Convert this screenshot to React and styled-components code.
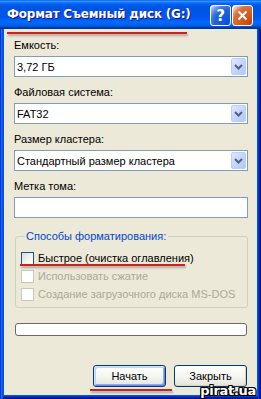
import React from "react";
import styled, { createGlobalStyle } from "styled-components";

const Global = createGlobalStyle`
  html, body { margin: 0; padding: 0; background: #ffffff; }
  body { font-family: "Liberation Sans", Arial, sans-serif; font-size: 11px; color: #000; }
  #root { width: 261px; height: 399px; overflow: hidden; }
`;

const Window = styled.div`
  position: relative;
  width: 261px;
  height: 399px;
  display: flex;
  flex-direction: column;
`;

const TitleBar = styled.div`
  height: 29px;
  flex: none;
  display: flex;
  align-items: center;
  padding: 0 8px 0 7px;
  box-sizing: border-box;
  background: linear-gradient(
    180deg,
    #0058ee 0%,
    #3a93ff 4%,
    #288eff 6%,
    #127dff 8%,
    #036ffc 10%,
    #0262ee 14%,
    #0057e5 20%,
    #0054e3 24%,
    #0055eb 56%,
    #005bf5 66%,
    #026afe 76%,
    #0062ef 86%,
    #0052d6 92%,
    #0040ab 94%,
    #003092 100%
  );
`;

const TitleText = styled.div`
  flex: 1;
  color: #ffffff;
  font-family: "DejaVu Sans", "Liberation Sans", sans-serif;
  font-weight: bold;
  font-size: 12px;
  letter-spacing: -0.2px;
  text-shadow: 1px 1px #0f1089;
  white-space: nowrap;
  padding-bottom: 1px;
`;

const TitleButtons = styled.div`
  display: flex;
  gap: 1px;
  margin-top: 2px;
`;

const CaptionButton = styled.div`
  width: 21px;
  height: 21px;
  box-sizing: border-box;
  border: 1px solid #ffffff;
  border-radius: 3px;
  display: flex;
  align-items: center;
  justify-content: center;
  color: #ffffff;
  font-family: "DejaVu Sans", sans-serif;
  font-weight: bold;
  font-size: 15px;
  background: ${(p) =>
    p.$close
      ? "radial-gradient(circle at 90% 90%, #cc4600 0%, #dc6527 55%, #cd7546 70%, #ffccb2 90%, #fff 100%)"
      : "radial-gradient(circle at 90% 90%, #0054e9 0%, #2263d5 55%, #4479e4 70%, #a3bbec 90%, #fff 100%)"};
`;

const Frame = styled.div`
  flex: 1;
  display: flex;
  padding: 0 4px 4px 4px;
  background: #0055e5;
  box-shadow: inset 1px 0 #0831d9, inset 2px 0 #166aee, inset 3px 0 #0855dd,
    inset -1px 0 #00138c, inset -2px 0 #001ea0, inset -3px 0 #003bda,
    inset 0 -1px #00138c, inset 0 -2px #001ea0, inset 0 -3px #003bda;
`;

const Client = styled.div`
  position: relative;
  flex: 1;
  display: flex;
  flex-direction: column;
  background: #ece9d8;
  padding: 9px 9px 0 10px;
`;

const Field = styled.div`
  display: flex;
  flex-direction: column;
  margin-bottom: 8px;
`;

const Label = styled.div`
  line-height: 14px;
  height: 14px;
  margin-bottom: 4px;
  white-space: nowrap;
`;

const Combo = styled.div`
  height: 21px;
  box-sizing: border-box;
  border: 1px solid #7f9db9;
  background: #ffffff;
  display: flex;
  align-items: center;
  padding-left: 2px;
  white-space: nowrap;
`;

const ComboText = styled.span`
  flex: 1;
`;

const DropButton = styled.div`
  width: 15px;
  height: 17px;
  margin-right: 1px;
  box-sizing: border-box;
  border: 1px solid #bccffb;
  border-radius: 2px;
  background: linear-gradient(135deg, #dfe8fd 0%, #c6d6fb 50%, #b3c7f7 100%);
  display: flex;
  align-items: center;
  justify-content: center;
`;

const TextBox = styled.div`
  height: 21px;
  box-sizing: border-box;
  border: 1px solid #7f9db9;
  background: #ffffff;
`;

const Group = styled.fieldset`
  margin: 3px 0 0 1px;
  padding: 6px 0 4px 5px;
  border: 1px solid #d0d0bf;
  border-radius: 3px;
  display: flex;
  flex-direction: column;
`;

const Legend = styled.legend`
  color: #0046d5;
  line-height: 14px;
  padding: 0 2px 0 1px;
  margin-left: 4px;
`;

const CheckRow = styled.div`
  height: 18px;
  display: flex;
  align-items: center;
  gap: 4px;
  white-space: nowrap;
  color: ${(p) => (p.$disabled ? "#aca899" : "#000000")};
`;

const Box = styled.span`
  width: 13px;
  height: 13px;
  box-sizing: border-box;
  flex: none;
  border: 1px solid ${(p) => (p.$disabled ? "#cac8bb" : "#1c5180")};
  background: ${(p) =>
    p.$disabled
      ? "#ffffff"
      : "linear-gradient(135deg, #dcdcd7 0%, #f5f5f1 60%, #ffffff 100%)"};
`;

const Progress = styled.div`
  margin: 15px 1px 0 1px;
  height: 13px;
  box-sizing: border-box;
  border: 1px solid #686868;
  border-radius: 3px;
  background: #ffffff;
`;

const ButtonRow = styled.div`
  margin-top: 29px;
  display: flex;
  justify-content: flex-end;
  gap: 8px;
  padding-right: 1px;
`;

const Button = styled.div`
  width: 73px;
  height: 22px;
  box-sizing: border-box;
  border: 1px solid #003c74;
  border-radius: 3px;
  display: flex;
  align-items: center;
  justify-content: center;
  background: linear-gradient(180deg, #ffffff 0%, #f3f3ef 60%, #e3e2da 100%);
  box-shadow: ${(p) =>
    p.$default
      ? "inset 1px 1px #cee7ff, inset -1px -1px #6982ee, inset 2px 2px #bcd4f6, inset -2px -2px #89ade4"
      : "inset -1px -1px #d6d0c5"};
`;

const Mark = styled.div`
  position: absolute;
  left: ${(p) => p.$left}px;
  top: ${(p) => p.$top}px;
  width: ${(p) => p.$width}px;
  height: 2px;
  background: #cc2121;
  box-shadow: 1px 2px 2px rgba(90, 90, 90, 0.45);
`;

const Watermark = styled.div`
  position: absolute;
  right: 5px;
  bottom: 1px;
  font-family: "DejaVu Sans", sans-serif;
  font-weight: bold;
  font-size: 13px;
  letter-spacing: -0.3px;
  color: #ffffff;
  line-height: 14px;
  text-shadow: 1px 0 #000, -1px 0 #000, 0 1px #000, 0 -1px #000, 1px 1px #000,
    -1px -1px #000, 1px -1px #000, -1px 1px #000;
`;

const Chevron = () => (
  <svg width="9" height="6" viewBox="0 0 9 6">
    <path d="M1 1 L4.5 4.5 L8 1" fill="none" stroke="#4d6185" strokeWidth="2" />
  </svg>
);

const CloseIcon = () => (
  <svg width="11" height="11" viewBox="0 0 11 11">
    <path d="M1.5 1.5 L9.5 9.5 M9.5 1.5 L1.5 9.5" stroke="#ffffff" strokeWidth="2" />
  </svg>
);

const combos = [
  { label: "Емкость:", value: "3,72 ГБ" },
  { label: "Файловая система:", value: "FAT32" },
  { label: "Размер кластера:", value: "Стандартный размер кластера" },
];

const options = [
  { text: "Быстрое (очистка оглавления)", disabled: false },
  { text: "Использовать сжатие", disabled: true },
  { text: "Создание загрузочного диска MS-DOS", disabled: true },
];

export default function App() {
  return (
    <>
      <Global />
      <Window>
        <TitleBar>
          <TitleText>Формат Съемный диск (G:)</TitleText>
          <TitleButtons>
            <CaptionButton>?</CaptionButton>
            <CaptionButton $close>
              <CloseIcon />
            </CaptionButton>
          </TitleButtons>
        </TitleBar>
        <Frame>
          <Client>
            {combos.map((c) => (
              <Field key={c.label}>
                <Label>{c.label}</Label>
                <Combo>
                  <ComboText>{c.value}</ComboText>
                  <DropButton>
                    <Chevron />
                  </DropButton>
                </Combo>
              </Field>
            ))}
            <Field>
              <Label>Метка тома:</Label>
              <TextBox />
            </Field>
            <Group>
              <Legend>Способы форматирования:</Legend>
              {options.map((o) => (
                <CheckRow key={o.text} $disabled={o.disabled}>
                  <Box $disabled={o.disabled} />
                  {o.text}
                </CheckRow>
              ))}
            </Group>
            <Progress />
            <ButtonRow>
              <Button $default>Начать</Button>
              <Button>Закрыть</Button>
            </ButtonRow>
            <Mark $left={3} $top={3} $width={180} />
            <Mark $left={16} $top={235} $width={165} />
            <Mark $left={86} $top={360} $width={82} />
          </Client>
        </Frame>
        <Watermark>pirat.ua</Watermark>
      </Window>
    </>
  );
}
